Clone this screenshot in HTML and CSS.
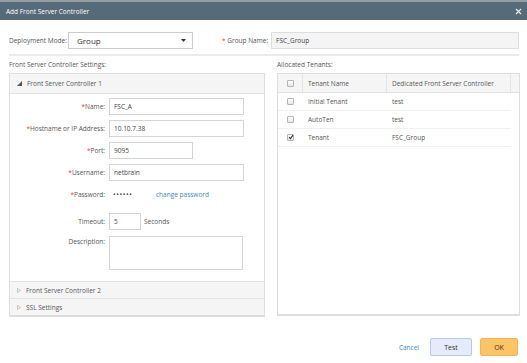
FILE: index.html
```html
<!DOCTYPE html>
<html lang="en">
<head>
    <meta charset="UTF-8">
    <meta name="viewport" content="width=device-width, initial-scale=1.0">
    <title>Add Front Server Controller</title>
    <link rel="stylesheet" href="styles.css">
</head>
<body>
    <div class="dialog">
        <div class="titlebar">
            <span>Add Front Server Controller</span>
            <svg class="close" width="7" height="7" viewBox="0 0 7 7"><path d="M1 1L6 6M6 1L1 6" stroke="#e6eaec" stroke-width="1.2"/></svg>
        </div>

        <div class="main">
            <!-- Mode and group name -->
            <div class="top-row">
                <span class="mode-label">Deployment Mode:</span>
                <div class="select">
                    <span>Group</span>
                    <svg width="5" height="3" viewBox="0 0 5 3"><path d="M0 0H5L2.5 3Z" fill="#333"/></svg>
                </div>
                <span class="group-label"><span class="req">*</span> Group Name:</span>
                <div class="input group-input">FSC_Group</div>
            </div>
            <div class="separator"></div>

            <div class="columns">
                <!-- Left column -->
                <div>
                    <div class="caption">Front Server Controller Settings:</div>
                    <div class="panel">
                        <div class="acc-head open">
                            <svg width="5" height="5" viewBox="0 0 5 5"><path d="M5 0V5H0Z" fill="#555"/></svg>
                            <span>Front Server Controller 1</span>
                        </div>
                        <div class="acc-body">
                            <div class="form">
                                <label><span class="req">*</span>Name:</label>
                                <div class="input wide">FSC_A</div>

                                <label><span class="req">*</span>Hostname or IP Address:</label>
                                <div class="input wide">10.10.7.38</div>

                                <label><span class="req">*</span>Port:</label>
                                <div class="input port">9095</div>

                                <label><span class="req">*</span>Username:</label>
                                <div class="input wide">netbrain</div>

                                <label><span class="req">*</span>Password:</label>
                                <div class="pw-row">
                                    <span class="dots">••••••</span>
                                    <a class="link">change password</a>
                                </div>

                                <label class="timeout-label">Timeout:</label>
                                <div class="timeout-row">
                                    <div class="input timeout">5</div>
                                    <span>Seconds</span>
                                </div>

                                <label class="desc-label">Description:</label>
                                <div class="textarea"></div>
                            </div>
                        </div>
                        <div class="acc-head closed">
                            <svg width="4" height="5" viewBox="0 0 4 5"><path d="M0.5 0.5L3.5 2.5L0.5 4.5Z" fill="none" stroke="#bbb" stroke-width="0.8"/></svg>
                            <span>Front Server Controller 2</span>
                        </div>
                        <div class="acc-head closed">
                            <svg width="4" height="5" viewBox="0 0 4 5"><path d="M0.5 0.5L3.5 2.5L0.5 4.5Z" fill="none" stroke="#bbb" stroke-width="0.8"/></svg>
                            <span>SSL Settings</span>
                        </div>
                    </div>
                </div>

                <!-- Right column -->
                <div>
                    <div class="caption">Allocated Tenants:</div>
                    <div class="table">
                        <div class="tbl-head">
                            <div class="cell chk"><span class="checkbox"></span></div>
                            <div class="cell">Tenant Name</div>
                            <div class="cell">Dedicated Front Server Controller</div>
                            <div class="cell"></div>
                        </div>
                        <div class="tbl-body">
                            <div class="tbl-row">
                                <div class="cell chk"><span class="checkbox"></span></div>
                                <div class="cell">Initial Tenant</div>
                                <div class="cell">test</div>
                            </div>
                            <div class="tbl-row">
                                <div class="cell chk"><span class="checkbox"></span></div>
                                <div class="cell">AutoTen</div>
                                <div class="cell">test</div>
                            </div>
                            <div class="tbl-row">
                                <div class="cell chk">
                                    <span class="checkbox checked">
                                        <svg width="6" height="6" viewBox="0 0 6 6"><path d="M1 3.2L2.4 4.6L5 1.2" fill="none" stroke="#333" stroke-width="1.1"/></svg>
                                    </span>
                                </div>
                                <div class="cell">Tenant</div>
                                <div class="cell">FSC_Group</div>
                            </div>
                        </div>
                    </div>
                </div>
            </div>

            <div class="footer">
                <a class="link cancel">Cancel</a>
                <button class="btn test">Test</button>
                <button class="btn ok">OK</button>
            </div>
        </div>
    </div>
</body>
</html>
```

FILE: styles.css
```css
body {
    margin: 0;
    background: #ffffff;
    font-family: "Open Sans", "Noto Sans", sans-serif;
    font-size: 6.5px;
    color: #555555;
}

.dialog {
    width: 527px;
    height: 363px;
    display: flex;
    flex-direction: column;
}

.titlebar {
    height: 18px;
    border-top: 2px solid #939ca2;
    background: #566a78;
    color: #ffffff;
    display: flex;
    align-items: center;
    justify-content: space-between;
    padding: 0 5px 0 6px;
    font-size: 6.5px;
}

.main {
    padding: 12px 8px 0 9px;
}

.req {
    color: #e5483d;
}

.top-row {
    display: flex;
    align-items: center;
    height: 17px;
}

.mode-label {
    width: 59px;
    flex-shrink: 0;
    white-space: nowrap;
}

.select {
    width: 109px;
    height: 15px;
    border: 1px solid #cccccc;
    display: flex;
    align-items: center;
    justify-content: space-between;
    padding: 0 6px 0 8px;
    flex-shrink: 0;
    font-size: 8px;
    color: #333333;
}

.group-label {
    margin-left: 29px;
    margin-right: 3px;
    flex-shrink: 0;
    white-space: nowrap;
}

.input {
    height: 15px;
    border: 1px solid #d4d4d4;
    display: flex;
    align-items: center;
    padding: 0 4px;
    color: #444444;
    background: #ffffff;
}

.group-input {
    width: 242px;
    background: #f4f4f4;
    border-color: #dddddd;
}

.separator {
    margin-top: 5px;
    border-top: 2px solid #ebebeb;
    width: 510px;
}

.columns {
    display: grid;
    grid-template-columns: 256px 243px;
    column-gap: 12px;
    margin-top: 4px;
}

.caption {
    height: 10px;
    line-height: 10px;
    margin-bottom: 3px;
}

.panel {
    border: 1px solid #dddddd;
    border-bottom-width: 2px;
}

.acc-head {
    display: flex;
    align-items: center;
    gap: 5px;
    background: #f5f5f5;
    padding-left: 7px;
    color: #555555;
}

.acc-head.open {
    height: 19px;
    border-bottom: 1px solid #e2e2e2;
}

.acc-head.closed {
    height: 16px;
    border-top: 1px solid #e2e2e2;
}

.acc-body {
    padding: 4px 0 11px 0;
}

.form {
    display: grid;
    grid-template-columns: 95px 1fr;
    column-gap: 4px;
    row-gap: 5px;
    align-items: center;
}

.form label {
    text-align: right;
    white-space: nowrap;
}

.input.wide {
    width: 125px;
}

.input.port {
    width: 74px;
}

.pw-row {
    height: 17px;
    display: flex;
    align-items: center;
    padding-left: 4px;
}

.dots {
    width: 43px;
    font-size: 7px;
    letter-spacing: 0.6px;
    color: #444444;
}

.link {
    color: #3a86c3;
    cursor: pointer;
}

.timeout-label,
.timeout-row {
    margin-top: 5px;
}

.timeout-row {
    display: flex;
    align-items: center;
    gap: 3px;
}

.input.timeout {
    width: 22px;
}

.desc-label {
    align-self: start;
    margin-top: 2px;
}

.textarea {
    width: 132px;
    height: 32px;
    border: 1px solid #d4d4d4;
    margin-top: 1px;
}

.table {
    border: 1px solid #dddddd;
    border-bottom-width: 2px;
    height: 240px;
}

.tbl-head {
    display: grid;
    grid-template-columns: 25px 84px 124px 1fr;
    height: 18px;
    background: #f5f5f5;
    border-bottom: 1px solid #e0e0e0;
}

.tbl-head .cell {
    border-right: 1px solid #e4e4e4;
}

.tbl-head .cell:last-child {
    border-right: none;
}

.cell {
    display: flex;
    align-items: center;
    padding-left: 5px;
    color: #555555;
}

.cell.chk {
    justify-content: center;
    padding-left: 0;
}

.tbl-body {
    width: 233px;
}

.tbl-row {
    display: grid;
    grid-template-columns: 25px 84px 124px;
    height: 17px;
    border-bottom: 1px solid #f0f0f0;
}

.checkbox {
    width: 5px;
    height: 5px;
    border: 1px solid #b5b5b5;
    border-radius: 1px;
    background: linear-gradient(#ffffff, #e6e6e6);
    display: flex;
    align-items: center;
    justify-content: center;
    position: relative;
}

.checkbox svg {
    position: absolute;
    left: 0;
    top: -1px;
}

.footer {
    display: flex;
    justify-content: flex-end;
    align-items: center;
    margin-top: 21px;
    padding-right: 1px;
}

.cancel {
    margin-right: 11px;
}

.btn {
    height: 18px;
    border-radius: 2px;
    font-family: "Open Sans", "Noto Sans", sans-serif;
    font-size: 7px;
    color: #333333;
    padding: 0;
    cursor: pointer;
}

.btn.test {
    width: 42px;
    background: #e3ecf8;
    border: 1px solid #b6cae4;
    margin-right: 8px;
}

.btn.ok {
    width: 38px;
    background: #fdc466;
    border: 1px solid #f3b552;
}
```
